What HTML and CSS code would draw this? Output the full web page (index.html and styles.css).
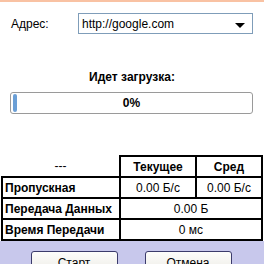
FILE: index.html
```html
<!DOCTYPE html>
<html>
<head>
<meta charset="utf-8">
<link rel="stylesheet" href="styles.css">
</head>
<body>
<div class="stripe"></div>
<div class="addr">
  <span class="addr-label">Адрес:</span>
  <div class="select">
    <span class="select-text">http://google.com</span>
    <svg class="arrow" width="10" height="6" viewBox="0 0 10 6"><path d="M0 0H10L5 5Z" fill="#000"/></svg>
  </div>
</div>
<div class="loading">Идет загрузка:</div>
<div class="progress">
  <div class="progress-fill"></div>
  <span class="progress-text">0%</span>
</div>
<table class="stats">
  <tr class="head">
    <td class="blank">---</td>
    <th>Текущее</th>
    <th>Сред</th>
  </tr>
  <tr>
    <th class="rowhead">Пропускная</th>
    <td>0.00 Б/с</td>
    <td>0.00 Б/с</td>
  </tr>
  <tr>
    <th class="rowhead">Передача Данных</th>
    <td colspan="2">0.00 Б</td>
  </tr>
  <tr>
    <th class="rowhead">Время Передачи</th>
    <td colspan="2">0 мс</td>
  </tr>
</table>
<div class="footer">
  <button class="btn">Старт</button>
  <button class="btn">Отмена</button>
</div>
</body>
</html>
```
FILE: styles.css
```css
html, body {
  margin: 0;
  padding: 0;
  background: #fff;
  font-family: "Liberation Sans", Arial, sans-serif;
  font-size: 12px;
  color: #000;
  overflow: hidden;
}
.stripe {
  height: 2px;
  background: #f9c2a3;
}
.addr {
  display: flex;
  align-items: center;
  margin-top: 11px;
  padding-left: 11px;
}
.addr-label {
  width: 67px;
}
.select {
  box-sizing: border-box;
  width: 175px;
  height: 21px;
  border: 1px solid #7f9db9;
  display: flex;
  align-items: center;
  justify-content: space-between;
  padding: 0 7px 0 3px;
}
.arrow {
  margin-top: 4px;
}
.loading {
  margin-top: 36px;
  text-align: center;
  font-weight: bold;
  line-height: 14px;
}
.progress {
  box-sizing: border-box;
  margin: 8px 11px 0 10px;
  height: 22px;
  border: 1px solid #9a9a9a;
  border-radius: 3px;
  display: flex;
  align-items: center;
  padding-left: 2px;
  position: relative;
}
.progress-fill {
  width: 4px;
  height: 18px;
  background: #6b9fd6;
  border-radius: 2px;
}
.progress-text {
  position: absolute;
  left: 0;
  right: 0;
  text-align: center;
  font-weight: bold;
}
.stats {
  margin: 41px 0 0 1px;
  width: 262px;
  border-collapse: collapse;
}
.stats td, .stats th {
  border: 2px solid #000;
  height: 17px;
  padding: 1px 2px;
  text-align: center;
  font-weight: normal;
  white-space: nowrap;
}
.stats tr.head th {
  font-weight: bold;
}
.stats td.blank {
  border-top: none;
  border-left: none;
  width: 113px;
}
.stats th.rowhead {
  text-align: left;
  font-weight: bold;
}
.stats tr.head th:nth-child(2) {
  width: 70px;
}
.footer {
  box-sizing: border-box;
  height: 24px;
  overflow: hidden;
  background: #c8c8ec;
  display: flex;
  align-items: flex-start;
  justify-content: center;
  gap: 27px;
  padding-top: 10px;
  padding-right: 2px;
}
.btn {
  flex: none;
  width: 87px;
  height: 23px;
  border: 1px solid #3b3b6b;
  border-radius: 3px;
  background: linear-gradient(#fdfdfb, #ecebe5);
  font-family: "Liberation Sans", Arial, sans-serif;
  font-size: 12px;
  color: #000;
  padding: 0;
}
```
